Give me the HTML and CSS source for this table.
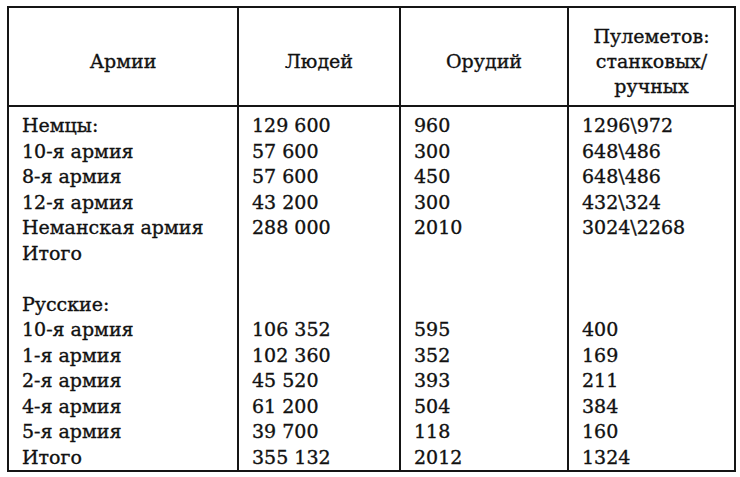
FILE: index.html
```html
<!DOCTYPE html>
<html lang="ru">
<head>
<meta charset="utf-8">
<link rel="stylesheet" href="styles.css">
</head>
<body>
<table class="forces">
  <colgroup>
    <col class="c1"><col class="c2"><col class="c3"><col class="c4">
  </colgroup>
  <thead>
    <tr class="head">
      <th>Армии</th>
      <th>Людей</th>
      <th>Орудий</th>
      <th>Пулеметов:<br>станковых/<br>ручных</th>
    </tr>
  </thead>
  <tbody>
    <tr class="first"><td>Немцы:</td><td>129 600</td><td>960</td><td>1296\972</td></tr>
    <tr><td>10-я армия</td><td>57 600</td><td>300</td><td>648\486</td></tr>
    <tr><td>8-я армия</td><td>57 600</td><td>450</td><td>648\486</td></tr>
    <tr><td>12-я армия</td><td>43 200</td><td>300</td><td>432\324</td></tr>
    <tr><td>Неманская армия</td><td>288 000</td><td>2010</td><td>3024\2268</td></tr>
    <tr><td>Итого</td><td></td><td></td><td></td></tr>
    <tr><td></td><td></td><td></td><td></td></tr>
    <tr><td>Русские:</td><td></td><td></td><td></td></tr>
    <tr><td>10-я армия</td><td>106 352</td><td>595</td><td>400</td></tr>
    <tr><td>1-я армия</td><td>102 360</td><td>352</td><td>169</td></tr>
    <tr><td>2-я армия</td><td>45 520</td><td>393</td><td>211</td></tr>
    <tr><td>4-я армия</td><td>61 200</td><td>504</td><td>384</td></tr>
    <tr><td>5-я армия</td><td>39 700</td><td>118</td><td>160</td></tr>
    <tr><td>Итого</td><td>355 132</td><td>2012</td><td>1324</td></tr>
  </tbody>
</table>
</body>
</html>
```
FILE: styles.css
```css
html, body {
  background: #ffffff;
}
body {
  margin: 6px 0 0 7px;
  font-family: "DejaVu Serif", "Liberation Serif", serif;
  font-size: 19px;
  color: #111111;
  -webkit-text-stroke: 0.35px #111111;
}
.forces {
  border-collapse: collapse;
  table-layout: fixed;
  width: 727px;
  border: 2px solid #151515;
}
.c1 { width: 230px; }
.c2 { width: 162px; }
.c3 { width: 168px; }
.c4 { width: 167px; }
.forces th, .forces td {
  border-left: 2px solid #151515;
  border-right: 2px solid #151515;
  padding: 0 0 0 13px;
  text-align: left;
  white-space: nowrap;
}
.forces th {
  font-weight: normal;
  text-align: center;
  padding: 10px 0 0 0;
  height: 87px;
  line-height: 25px;
  vertical-align: middle;
  border-bottom: 2px solid #151515;
}
.forces td {
  height: 25.5px;
  line-height: 25.5px;
  vertical-align: top;
}
.forces tr.first td {
  padding-top: 6px;
}
```
